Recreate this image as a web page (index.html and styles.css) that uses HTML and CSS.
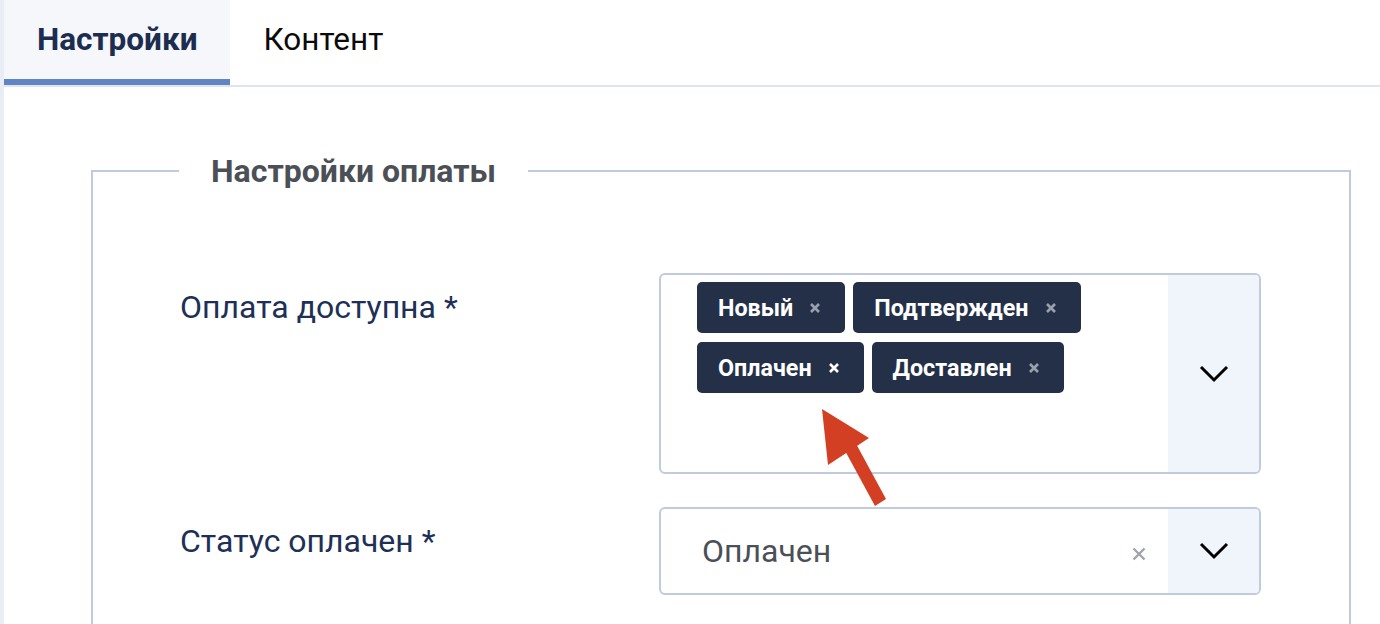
FILE: index.html
```html
<!DOCTYPE html>
<html lang="ru">
<head>
<meta charset="utf-8">
<title>Настройки</title>
<link rel="stylesheet" href="styles.css">
</head>
<body>
<div class="page">
  <nav class="tabs">
    <div class="tab tab-active">Настройки</div>
    <div class="tab">Контент</div>
  </nav>
  <div class="content">
    <fieldset class="group">
      <legend class="group-title">Настройки оплаты</legend>
      <div class="row">
        <label class="label">Оплата доступна *</label>
        <div class="select select-multi">
          <div class="tags">
            <span class="tag">Новый<svg class="tag-x" viewBox="0 0 12 12"><path d="M2 2L10 10M10 2L2 10"/></svg></span>
            <span class="tag">Подтвержден<svg class="tag-x" viewBox="0 0 12 12"><path d="M2 2L10 10M10 2L2 10"/></svg></span>
            <span class="tag">Оплачен<svg class="tag-x tag-x-hover" viewBox="0 0 12 12"><path d="M2 2L10 10M10 2L2 10"/></svg></span>
            <span class="tag">Доставлен<svg class="tag-x" viewBox="0 0 12 12"><path d="M2 2L10 10M10 2L2 10"/></svg></span>
          </div>
          <div class="indicator"><svg class="chevron" viewBox="0 0 30 18"><path d="M2 2L15 15L28 2"/></svg></div>
        </div>
      </div>
      <div class="row">
        <label class="label">Статус оплачен *</label>
        <div class="select select-single">
          <div class="value">Оплачен</div>
          <svg class="clear-x" viewBox="0 0 14 14"><path d="M1.5 1.5L12.5 12.5M12.5 1.5L1.5 12.5"/></svg>
          <div class="indicator"><svg class="chevron" viewBox="0 0 30 18"><path d="M2 2L15 15L28 2"/></svg></div>
        </div>
      </div>
    </fieldset>
  </div>
  <svg class="arrow" viewBox="0 0 1380 624" width="1380" height="624">
    <polygon points="822,409 828,465 869,438"/>
    <polygon points="843,447 854,440 886,499 875,506"/>
  </svg>
</div>
</body>
</html>
```
FILE: styles.css
```css
html, body {
  margin: 0;
  padding: 0;
  background: #ffffff;
  font-family: Roboto, "Noto Sans", "Liberation Sans", sans-serif;
}

.page {
  position: relative;
  width: 1380px;
  height: 624px;
  overflow: hidden;
  box-sizing: border-box;
  border-left: 4px solid #e8edf6;
}

.tabs {
  display: flex;
  border-bottom: 2px solid #dfe4f1;
}

.tab {
  height: 79px;
  padding: 0 33px;
  display: flex;
  align-items: center;
  font-size: 31.5px;
  color: #0b0b0b;
  border-bottom: 6px solid transparent;
}

.tab-active {
  background: #f5f7fb;
  border-bottom-color: #6384c4;
  color: #1c2d50;
  font-weight: 700;
}

.content {
  padding: 66px 29px 0 87px;
}

.group {
  margin: 0;
  padding: 0 0 40px 0;
  border: 2px solid #bfcadd;
  border-radius: 0;
  min-width: 0;
}

.group-title {
  margin-left: 86px;
  padding: 0 32px;
  font-size: 32px;
  line-height: 36px;
  font-weight: 700;
  color: #4b5057;
}

.row {
  display: grid;
  grid-template-columns: 479px 602px;
  align-items: start;
  padding-left: 87px;
}

.row + .row {
  margin-top: 33px;
}

.row:first-of-type {
  margin-top: 84px;
}

.label {
  padding-top: 15px;
  font-size: 32px;
  line-height: 38px;
  color: #1e3056;
}

.select {
  box-sizing: border-box;
  border: 2px solid #c0cbde;
  border-radius: 6px;
  display: flex;
  overflow: hidden;
  background: #ffffff;
}

.select-multi {
  height: 201px;
}

.select-single {
  height: 88px;
  align-items: stretch;
}

.tags {
  flex: 1;
  display: flex;
  flex-wrap: wrap;
  align-content: flex-start;
  gap: 9px 8px;
  padding: 7px 0 0 36px;
}

.tag {
  height: 51px;
  box-sizing: border-box;
  display: inline-flex;
  align-items: center;
  padding: 0 24px 0 21px;
  background: #243048;
  border-radius: 5px;
  color: #ffffff;
  font-size: 23.3px;
  font-weight: 700;
}

.tag-x {
  width: 12px;
  height: 12px;
  margin-left: 16px;
  fill: none;
  stroke: #9aa1ae;
  stroke-width: 2.6;
}

.tag-x-hover {
  stroke: #ffffff;
}

.indicator {
  width: 91px;
  flex: none;
  background: #f0f4fb;
  display: flex;
  align-items: center;
  justify-content: center;
  margin-left: auto;
}

.chevron {
  width: 30px;
  height: 18px;
  fill: none;
  stroke: #000000;
  stroke-width: 3;
}

.value {
  flex: 1;
  display: flex;
  align-items: center;
  padding-left: 41px;
  font-size: 32px;
  color: #4b4f57;
}

.clear-x {
  align-self: center;
  width: 14px;
  height: 14px;
  margin: 6px 22px 0 0;
  fill: none;
  stroke: #a0a4ab;
  stroke-width: 2.4;
}

.arrow {
  position: absolute;
  left: -4px;
  top: 0;
  pointer-events: none;
}

.arrow polygon {
  fill: #d33f22;
}
```
